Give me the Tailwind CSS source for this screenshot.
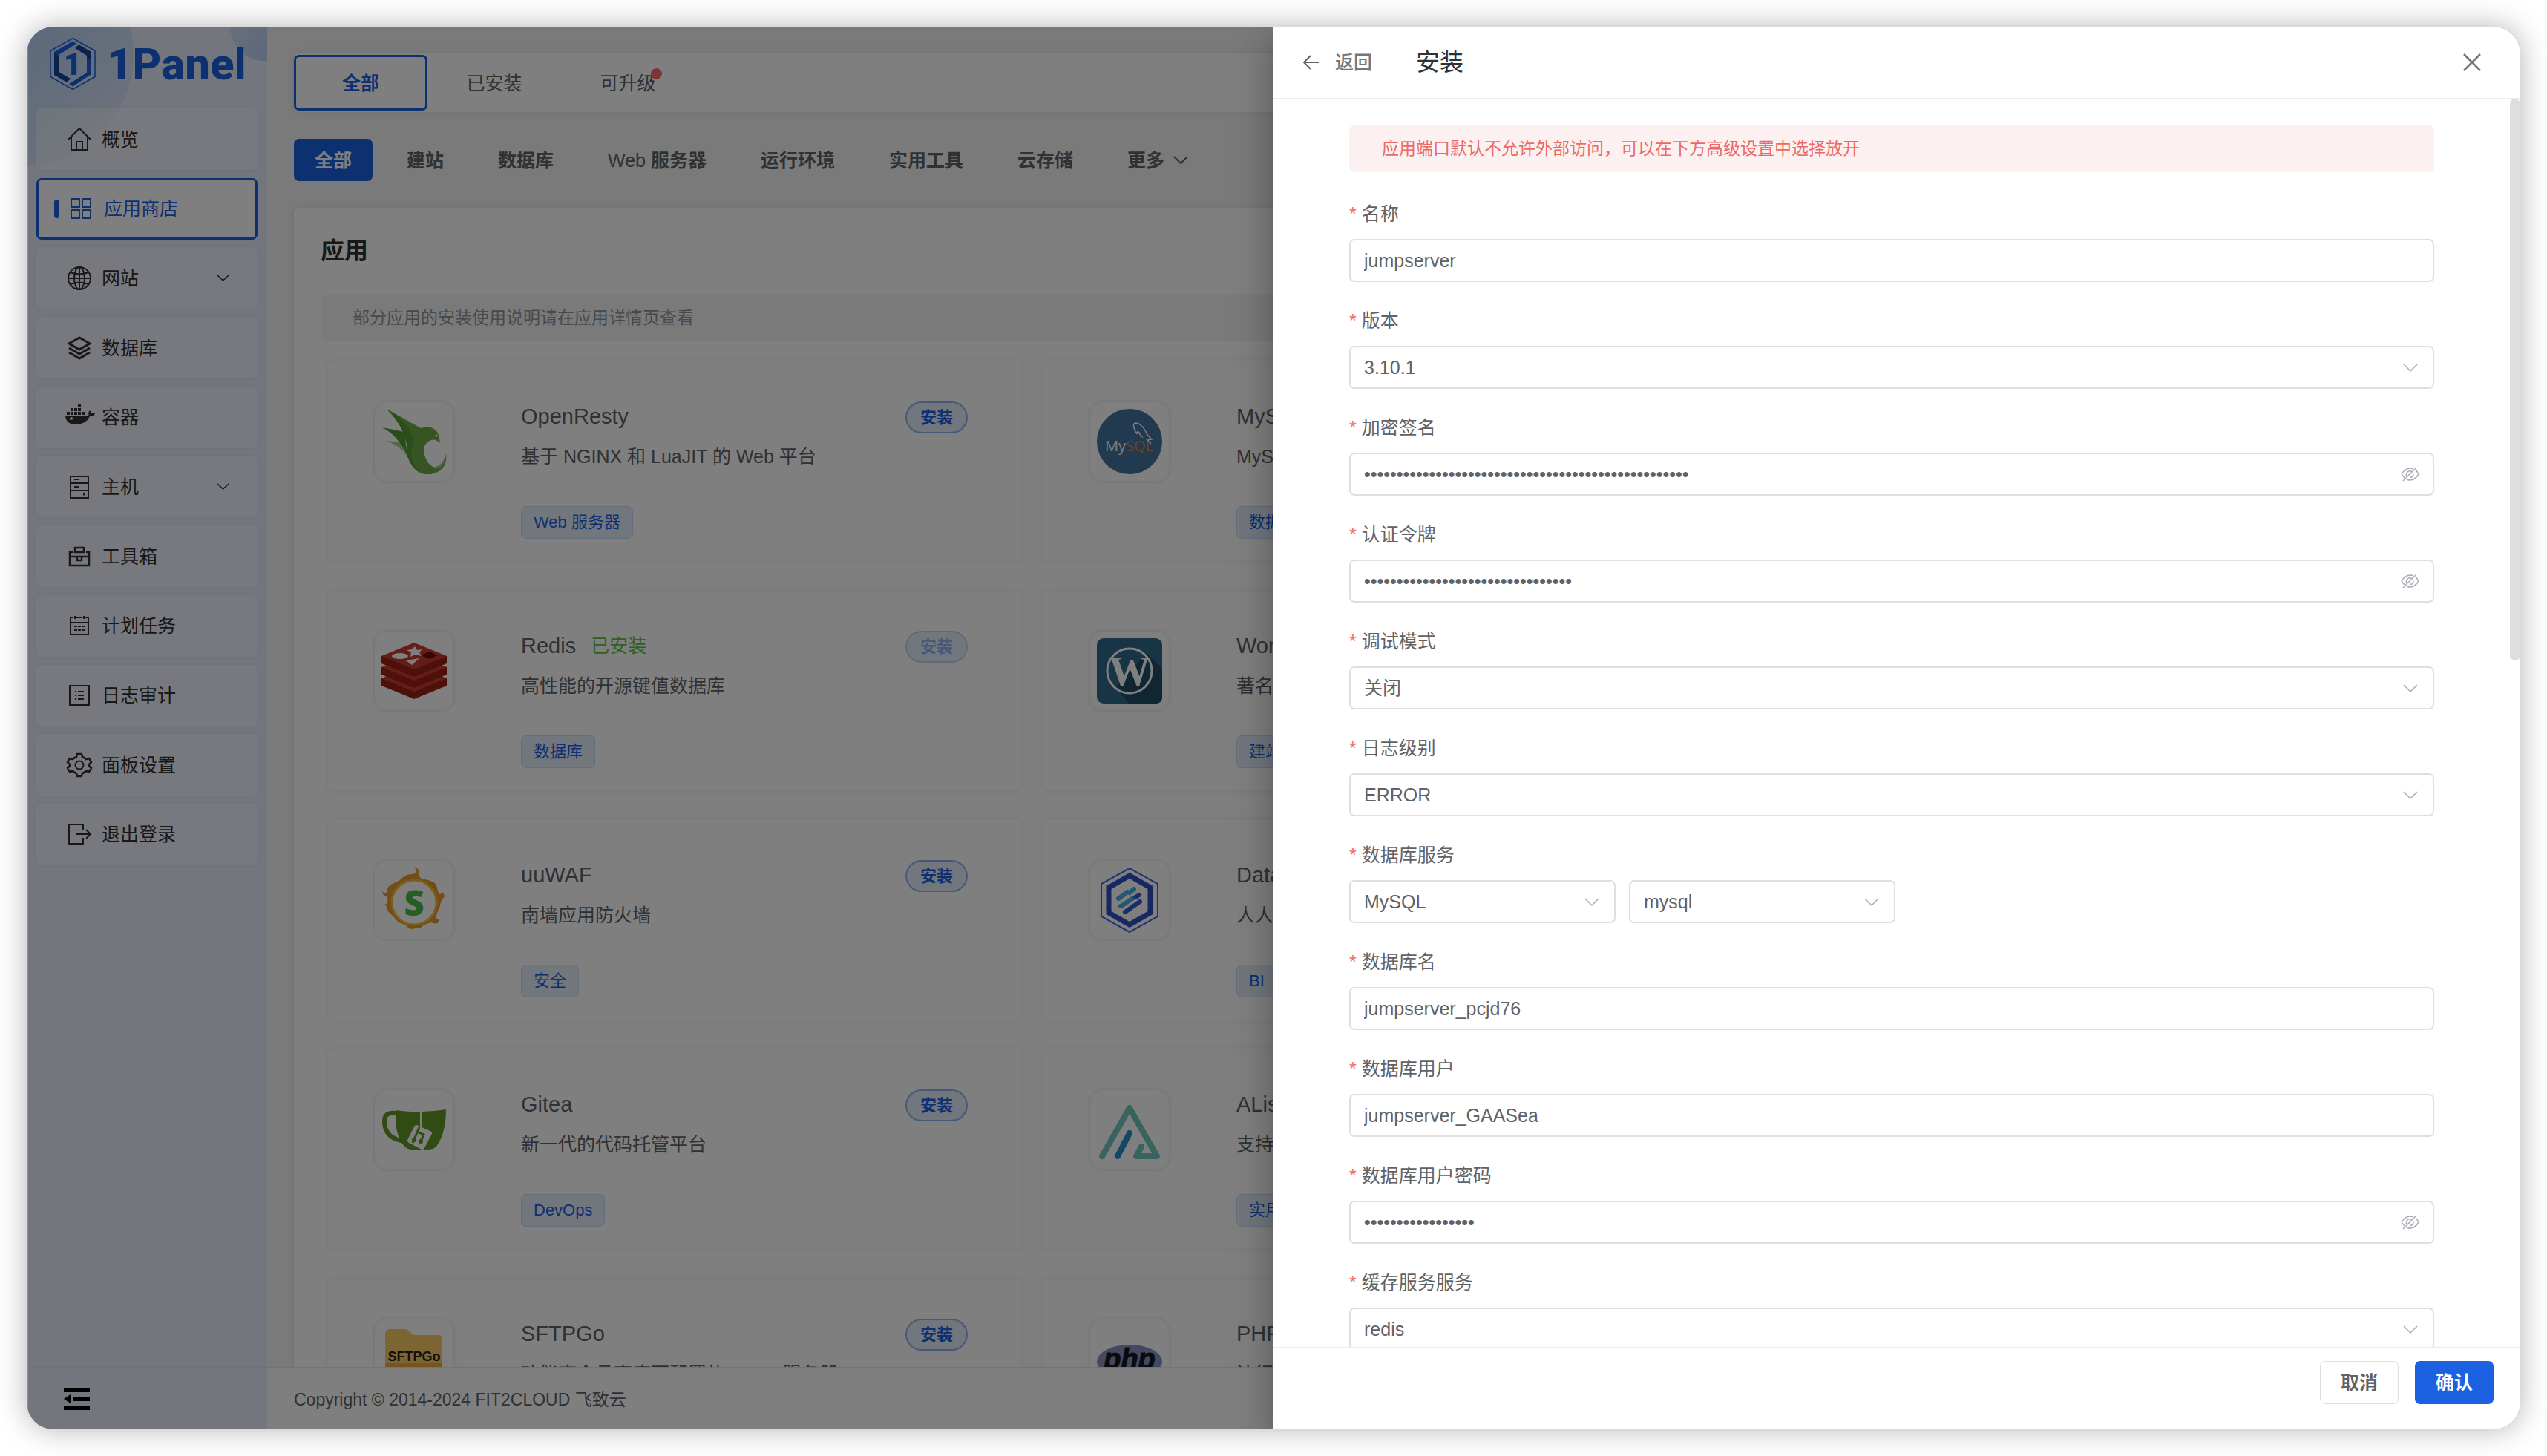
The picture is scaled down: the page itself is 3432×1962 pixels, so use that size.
<!DOCTYPE html>
<html lang="zh-CN">
<head>
  <meta charset="UTF-8" />
  <meta name="viewport" content="width=device-width, initial-scale=1.0" />
  <title>1Panel - 应用商店</title>
  <script src="https://cdn.jsdelivr.net/npm/@tailwindcss/browser@4"></script>
</head>
<body class="h-screen bg-white p-9 font-['Liberation_Sans','Noto_Sans_CJK_SC',sans-serif] text-[25px] leading-[40px] text-[#606266]">
  <div class="relative flex h-full overflow-hidden rounded-[36px] bg-[#f4f4f4] shadow-[0_0_40px_rgba(0,0,0,0.3)]">

    <!-- Sidebar -->
    <aside class="relative flex w-[324px] shrink-0 flex-col overflow-hidden bg-[#e6ecfb]">
      <svg class="absolute top-0 left-0" width="324" height="220" fill="none">
        <defs>
          <linearGradient id="glow" x1="0" y1="0" x2="0.9" y2="0.9">
            <stop offset="0.3" stop-color="#a9cdf2" />
            <stop offset="1" stop-color="#dfe6fa" />
          </linearGradient>
          <linearGradient id="drop" x1="0" y1="0" x2="1" y2="0.8">
            <stop offset="0.2" stop-color="#d4e0f7" />
            <stop offset="1" stop-color="#b4cbf5" />
          </linearGradient>
        </defs>
        <circle cx="-6" cy="38" r="150" fill="url(#glow)" />
        <circle cx="320" cy="0" r="46" fill="url(#drop)" />
      </svg>
      <a href="#" class="relative flex h-[110px] items-start gap-[14px] pt-[14px] pl-[30px] text-[#1b61e2]">
        <svg width="64" height="72" viewBox="0 0 64 72" fill="none">
          <path d="M32 1.500 62 18.500v35L32 70.500 2 53.500v-35Z" stroke="#1b61e2" stroke-width="1.500" />
          <path d="M32 5.500 37 9 13 24v24l-6 3V20Z" fill="#1b61e2" />
          <path d="M7 22l6 3v22l16 9-5 5-17-10Z" fill="#134697" />
          <path d="M40 10l17 10v31l-6-4V25L35 15Z" fill="#134697" />
          <path d="M57 50 32 66.500 27 63l24-15V28l6 2Z" fill="#1b61e2" />
          <text x="32" y="51" text-anchor="middle" font-family="Roboto" font-weight="900" font-size="42" fill="#1b61e2">1</text>
        </svg>
        <span class="font-[Roboto] text-[60px] leading-[74px] font-extrabold">1Panel</span>
      </a>
      <nav id="menu" class="relative mx-[13px] flex h-[1020px] flex-col justify-between text-[#303133]"></nav>
      <div class="relative mt-auto flex h-[84px] items-center border-t-2 border-[#dfe3ee] pl-[50px]">
        <button type="button" aria-label="收起菜单">
          <svg width="36" height="30" viewBox="0 0 36 30" fill="#000"><path d="M0 0h35v6H0zM12 12h23v6H12zM0 24h35v6H0zM9 9v12L0 15z" /></svg>
        </button>
      </div>
    </aside>

    <!-- App store -->
    <main class="flex min-w-0 flex-1 flex-col">
      <div class="flex min-h-0 flex-1 flex-col overflow-hidden pt-9 pl-9">
        <div class="flex h-[79px] shrink-0 items-center rounded-[7px] bg-white shadow-[0_0_8px_rgba(0,60,200,0.1)]">
          <button type="button" class="h-[75px] w-[180px] rounded-[7px] border-3 border-[#1b61e2] font-bold text-[#1b61e2]">全部</button>
          <button type="button" class="h-[75px] w-[180px]">已安装</button>
          <button type="button" class="h-[75px] w-[180px]"><span class="relative">可升级<i class="absolute -top-[6px] -right-2 size-[15px] rounded-full bg-[#f56c6c]"></i></span></button>
        </div>

        <div class="mt-9 flex h-[57px] shrink-0 gap-[19px] font-bold">
          <button type="button" class="rounded-[7px] bg-[#1b61e2] px-7 text-white">全部</button>
          <button type="button" class="px-[27px]">建站</button>
          <button type="button" class="px-[27px]">数据库</button>
          <button type="button" class="px-[27px]"><span class="font-normal">Web</span> 服务器</button>
          <button type="button" class="px-[27px]">运行环境</button>
          <button type="button" class="px-[27px]">实用工具</button>
          <button type="button" class="px-[27px]">云存储</button>
          <button type="button" class="flex items-center gap-3 px-[27px]">更多
            <svg width="20" height="12" viewBox="0 0 20 12" fill="none" stroke="#606266" stroke-width="2"><path d="m1 1 9 9 9-9" /></svg>
          </button>
        </div>

        <section class="mt-9 min-h-0 flex-1 rounded-tl-[7px] bg-white pt-9 pl-9 shadow-[0_0_8px_rgba(0,60,200,0.1)]">
          <h1 class="text-[32px] leading-[45px] font-bold text-[#303133]">应用</h1>
          <p class="mt-9 h-[63px] rounded-[7px] bg-[#f4f4f5] pl-[43px] text-[23px] leading-[63px] text-[#909399]">部分应用的安装使用说明请在应用详情页查看</p>
          <div id="apps" class="mt-[26px] ml-[9px] grid grid-cols-[936px_936px] gap-x-7 gap-y-[38px]"></div>
        </section>
      </div>
      <footer class="relative h-[84px] shrink-0 border-t-2 border-[#e4e7ed] bg-white pl-9 text-[23px] leading-[84px]">Copyright © 2014-2024 FIT2CLOUD 飞致云</footer>
    </main>

    <!-- Mask -->
    <div class="absolute inset-0 border-l-2 border-white/20 bg-black/50"></div>

    <!-- Install drawer -->
    <div role="dialog" aria-label="安装" class="absolute inset-y-0 right-0 flex w-1/2 flex-col bg-white shadow-[0_14px_18px_-9px_rgba(0,0,0,0.2),0_29px_43px_4px_rgba(0,0,0,0.14),0_11px_54px_9px_rgba(0,0,0,0.12)]">
      <header class="flex h-[97px] shrink-0 items-center border-b border-[#ebebeb] pr-[53px] pl-[39px]">
        <button type="button" class="flex items-center gap-[21px] font-medium text-[#73767a]">
          <svg width="23" height="20" viewBox="0 0 23 20" fill="none" stroke="#606266" stroke-width="2"><path d="M22 10H2M11 1l-9 9 9 9" /></svg>
          返回
        </button>
        <span class="mx-[29px] h-7 w-px bg-[#dcdfe6]"></span>
        <h2 class="text-[32px] text-[#303133]">安装</h2>
        <button type="button" aria-label="关闭" class="ml-auto">
          <svg width="24" height="24" viewBox="0 0 24 24" fill="none" stroke="#73767a" stroke-width="2.500"><path d="m1 1 22 22M23 1 1 23" /></svg>
        </button>
      </header>

      <div class="flex min-h-0 flex-1 overflow-hidden">
        <form id="form" class="min-w-0 flex-1 pt-9 pr-[102px] pl-[102px]">
          <p role="alert" class="mb-9 h-[63px] rounded-[7px] bg-[#fcf0f0] pl-11 text-[23px] leading-[63px] text-[#ec6a66]">应用端口默认不允许外部访问，可以在下方高级设置中选择放开</p>
        </form>
        <div class="h-[757px] w-[14px] rounded-full bg-[#dddee0]"></div>
      </div>

      <footer class="flex h-[111px] shrink-0 gap-[22px] border-t border-[#ebebeb] pt-[18px] pr-9 font-bold">
        <button type="button" class="ml-auto h-[58px] w-[106px] rounded-[7px] border border-[#dcdfe6]">取消</button>
        <button type="submit" form="form" class="h-[58px] w-[106px] rounded-[7px] bg-[#1b61e2] text-white">确认</button>
      </footer>
    </div>
  </div>

  <script>
    const menuItems = [
      { name: "概览", icon: `<path d="M2 17 17 2l15 15M6 14v17h22V14M13 31V20h8v11" />` },
      { name: "应用商店", active: true, icon: `<path d="M4 4h11v11H4zM19 4h11v11H19zM4 19h11v11H4zM19 19h11v11H19z" />` },
      { name: "网站", sub: true, icon: `<circle cx="17" cy="17" r="15" /><ellipse cx="17" cy="17" rx="7" ry="15" /><path d="M17 2v30M2 17h30M5 9q12 5 24 0M5 25q12-5 24 0" />` },
      { name: "数据库", icon: `<path d="m17 3 14 8-14 8-14-8ZM3 17l14 8 14-8M3 23l14 8 14-8" stroke-width="3" />` },
      { name: "容器", icon: `<g fill="#303133" stroke="none"><path d="M-2 15h31q1-1 0-4l2-3q2 2 2 4 3-1 5 0-1 4-7 4-5 11-19 11-13 0-14-12Z" /><path d="M0 10h4v4H0zM5 10h4v4H5zM10 10h4v4h-4zM15 10h4v4h-4zM20 10h4v4h-4zM5 5h4v4H5zM10 5h4v4h-4zM15 5h4v4h-4zM15 0h4v4h-4z" /></g><circle cx="6" cy="19" r="2" fill="#eff4fd" stroke="none" />` },
      { name: "主机", sub: true, icon: `<path d="M5 3h24v29H5zM5 12h24M5 22h24M10 7h7M10 17h7" /><path d="M22 27h3" stroke-width="3" />` },
      { name: "工具箱", icon: `<path d="M8 11H4v18h26V11h-4M11 11V5h12v6ZM4 17h9M21 17h9M14 17h6v5h-6Z" stroke-width="2.500" />` },
      { name: "计划任务", icon: `<path d="M9 6H5v23h24V6h-4M13 6h8M5 13h24M11 4v4M23 4v4M10 18h4M15 18h4M20 18h4M10 23h4M15 23h4M20 23h4" />` },
      { name: "日志审计", icon: `<path d="M4 4h26v26H4zM15 12h8M15 17h8M15 22h8M11 12h2M11 17h2M11 22h2" />` },
      { name: "面板设置", icon: `<path d="M14 2h6l1 4q3 1 5 3l4-1 3 5-3 3v2l3 3-3 5-4-1q-2 2-5 3l-1 4h-6l-1-4q-3-1-5-3l-4 1-3-5 3-3v-2l-3-3 3-5 4 1q2-2 5-3Z" stroke-width="2.500" /><circle cx="17" cy="17" r="5.500" />` },
      { name: "退出登录", icon: `<path d="M22 12V4H3v26h19v-8M12 17h20M26 11l6 6-6 6" />` },
    ];

    document.getElementById("menu").innerHTML = menuItems.map(item => `
      <a href="#" class="${item.active
        ? "flex h-[83px] items-center gap-[14px] rounded-[7px] border-3 border-[#1b61e2] bg-white pl-[21px] text-[#1b61e2]"
        : "flex h-[83px] items-center gap-[13px] rounded-[7px] bg-white/40 pr-[38px] pl-[41px] shadow-[0_0_4px_rgba(0,60,200,0.08)]"}">
        ${item.active ? `<i class="-mr-[2px] h-[25px] w-[7px] rounded-full bg-[#1b61e2]"></i>` : ""}
        <svg class="shrink-0 overflow-visible" width="34" height="34" viewBox="0 0 34 34" fill="none" stroke="currentColor" stroke-width="2">${item.icon}</svg>
        ${item.name}
        ${item.sub ? `<svg class="ml-auto" width="17" height="10" viewBox="0 0 17 10" fill="none" stroke="currentColor" stroke-width="1.500"><path d="m1 1 7.500 7L16 1" /></svg>` : ""}
      </a>`).join("");

    // one slab of the Redis stack, y is the middle of its top face
    const slab = (y) => `<path d="M0 ${y}v10l44 18 44-18V${y}Z" fill="#9c2117" /><path d="m0 ${y} 44-18 44 18-44 18Z" fill="#cb3a2e" />`;

    const apps = [
      { name: "OpenResty", desc: "基于 NGINX 和 LuaJIT 的 Web 平台", tag: "Web 服务器",
        icon: `<path d="M5 43q14 1 20 2l10 19Q24 48 5 43Z" fill="#a9d09b" /><path d="m1 25 30 6 4 33Q23 36 1 25Z" fill="#559b38" /><path d="m7 0 46 26q14-5 22 5 3 5 4 15-6-6-12-4-13 5-9 20 4 14 14 17 12-4 15-18 2 14-8 22-12 8-25 4-12-5-19-23Q39 32 7 0Z" fill="#6cab47" /><path d="M7 0q28 18 34 34 3 12-1 22 0 18 12 30-11-5-17-22Q37 30 7 0Z" fill="#579b36" /><circle cx="74" cy="36" r="1.500" fill="#fff" /><path d="M72 79q10-2 15-18 0 11-8 19Z" fill="#9cc68c" />` },
      { name: "MySQL", desc: "MySQL 是开源关系型数据库", tag: "数据库",
        icon: `<circle cx="44" cy="44" r="44" fill="#45749f" /><path d="M54 34q-8-14-2-15 8 0 14 12 2 5 8 10l-6 1 5 5M54 34q0-6 3-2 2 5 5 6" fill="none" stroke="#fff" stroke-width="1.500" /><text x="11" y="57" font-family="Open Sans" font-size="20" fill="#fff">My</text><text x="39" y="57" font-family="Open Sans" font-size="20" fill="#ea8420">SQL</text>` },
      { name: "Redis", desc: "高性能的开源键值数据库", tag: "数据库", installed: true,
        icon: `${slab(54)}${slab(39)}${slab(24)}<path d="m45 11 3 5 7-1-4 4 3 5-8-2-7 3 1-6-6-3 7-1ZM33 30l18-3-10 9Z" fill="#fff" /><ellipse cx="25" cy="24" rx="11" ry="4" fill="#fff" /><path d="m53 23 12-5 10 5-10 5Z" fill="#6c0f09" />` },
      { name: "WordPress", desc: "著名的开源博客软件", tag: "建站",
        icon: `<rect width="88" height="88" rx="9" fill="#306a8c" /><path d="m67 20 21 21v38q0 9-9 9H43L25 66Z" fill="#204c66" /><circle cx="44" cy="44" r="30" fill="none" stroke="#fff" stroke-width="3" /><text x="44" y="64" text-anchor="middle" font-family="Liberation Serif" font-weight="bold" font-size="56" fill="#fff">W</text>` },
      { name: "uuWAF", desc: "南墙应用防火墙", tag: "安全",
        icon: `<path d="M25 17Q33 8 42 9q5-1 5-5-1-3-4-3 7-1 8 5-2 6 3 9l9 2q10 2 12 10 1 8 4 9 4-1 1-5 4 3 5 8-6 7-6 13l-3 6-3 10 5 3q-2 7-11 3l-9 3-4 3q-3 4-7 1-5 4-11 0l-4-4-9-3-8-9-6-6-2-6q-2-3-5-5 4 3 6 0 1-6-1-9-5 1-6-8 3 6 6 3 0-10 10-13Z" fill="#e79a2e" /><circle cx="44" cy="47" r="30" fill="#fff" stroke="#f6bc33" stroke-width="3" /><text x="44" y="65" text-anchor="middle" font-family="Open Sans" font-weight="800" font-size="47" fill="#48bd4a">S</text>` },
      { name: "DataEase", desc: "人人可用的开源数据可视化分析工具", tag: "BI",
        icon: `<path d="M44 1 82 22v44L44 87 6 66V22Z" fill="none" stroke="#3c67e3" stroke-width="2" /><path d="M44 11 72 27v34L44 77 16 61V27Z" fill="none" stroke="#2e4fc4" stroke-width="7" /><g stroke-width="6" stroke-linecap="round"><path d="m44 34 6-5M29 42l12-9M33 52l16-11" stroke="#49aee3" /><path d="m38 60 20-14M52 40l5-3" stroke="#315bd4" /><path d="M32 52h1" stroke="#49aee3" /></g>` },
      { name: "Gitea", desc: "新一代的代码托管平台", tag: "DevOps",
        icon: `<path d="M24 23Q3 18 4 34q1 21 23 25" fill="none" stroke="#609926" stroke-width="6" /><path d="M19 18q34 5 68-1 0 32-13 50-4 4-12 4H40q-10-1-16-15-6-15-5-38Z" fill="#609926" /><path d="m47 41 18 8-10 19-17-9Z" fill="#fff" stroke="#fff" stroke-width="6" stroke-linejoin="round" /><path d="m51 41-9 21M48 47l9 4-4 9" fill="none" stroke="#609926" stroke-width="3" /><path d="M53 19v22" stroke="#fff" stroke-width="2" /><circle cx="44" cy="58" r="3" fill="#609926" /><circle cx="53" cy="60" r="3" fill="#609926" />` },
      { name: "AList", desc: "支持多存储的文件列表程序", tag: "实用工具",
        icon: `<g fill="none" stroke-width="8" stroke-linecap="round" stroke-linejoin="round"><path d="m7 80 37-65 37 65H53l7-13" stroke="#70c6be" /><path d="m28 80 16-31" stroke="#2b8ecb" /></g>` },
      { name: "SFTPGo", desc: "功能齐全且高度可配置的 SFTP 服务器", tag: "云存储",
        icon: `<path d="M5 10q0-6 6-6h23l9 8h33q6 0 6 6v62H5Z" fill="#fbc866" /><path d="M5 50h77v30H5Z" fill="#e9ab40" /><text x="44" y="47" text-anchor="middle" font-family="Liberation Sans" font-weight="bold" font-size="18" fill="#222">SFTPGo</text>` },
      { name: "PHP", desc: "流行的开源脚本语言", tag: "运行环境",
        icon: `<ellipse cx="44" cy="48" rx="44" ry="23" fill="#8892bf" /><text x="44" y="57" text-anchor="middle" font-family="Liberation Sans" font-weight="bold" font-style="italic" font-size="38" fill="#15171f" stroke="#15171f">php</text>` },
    ];

    document.getElementById("apps").innerHTML = apps.map(app => `
      <article class="flex h-[271px] items-start rounded-[7px] border border-[#f3f5fa] bg-white pt-[54px] pr-[72px] pl-[62px] shadow-[0_0_8px_rgba(0,60,200,0.08)]">
        <div class="grid size-[108px] shrink-0 place-items-center rounded-[18px] border border-[#ebeef5] shadow-[0_0_6px_rgba(0,0,0,0.1)]">
          <svg width="88" height="88" viewBox="0 0 88 88">${app.icon}</svg>
        </div>
        <div class="ml-[90px] flex min-w-0 flex-1 flex-col items-start whitespace-nowrap">
          <h3 class="flex gap-5 text-[29px] font-medium">${app.name}${app.installed ? `<span class="text-[25px] font-normal text-[#67c23a]">已安装</span>` : ""}</h3>
          <p class="mt-[14px]">${app.desc}</p>
          <span class="mt-[47px] h-11 rounded-[7px] border border-[#c9dbf8] bg-[#e5effd] px-4 text-[22px] leading-[42px] text-[#1b61e2]">${app.tag}</span>
        </div>
        <button type="button" ${app.installed ? "disabled" : ""} class="h-[43px] w-[84px] shrink-0 rounded-full border-2 border-[#8eb2f0] bg-[#e5effd] text-[22px] leading-[39px] font-bold text-[#1b61e2] disabled:border-[#bcd3f8] disabled:text-[#8eb2f0]">安装</button>
      </article>`).join("");

    const fields = [
      { label: "名称", value: "jumpserver" },
      { label: "版本", options: ["3.10.1"] },
      { label: "加密签名", password: 50 },
      { label: "认证令牌", password: 32 },
      { label: "调试模式", options: ["关闭"] },
      { label: "日志级别", options: ["ERROR"] },
      { label: "数据库服务", options: ["MySQL", "mysql"] },
      { label: "数据库名", value: "jumpserver_pcjd76" },
      { label: "数据库用户", value: "jumpserver_GAASea" },
      { label: "数据库用户密码", password: 17 },
      { label: "缓存服务服务", options: ["redis"] },
    ];

    function control(field, id) {
      if (field.options) {
        return field.options.map((option, n) => `
          <div class="${field.options.length > 1 ? "relative w-[359px]" : "relative w-full"}">
            <select id="${n ? id + "-" + n : id}" aria-label="${field.label}" class="h-[58px] w-full appearance-none rounded-[7px] border-2 border-[#dcdfe6] bg-white px-[18px]"><option>${option}</option></select>
            <svg class="pointer-events-none absolute top-6 right-[22px]" width="20" height="12" viewBox="0 0 20 12" fill="none" stroke="#a8abb2" stroke-width="1.500"><path d="m1 1 9 9 9-9" /></svg>
          </div>`).join("");
      }
      if (field.password) {
        return `
          <div class="relative w-full">
            <input id="${id}" type="password" value="${"x".repeat(field.password)}" class="h-[58px] w-full rounded-[7px] border-2 border-[#dcdfe6] px-[18px]" />
            <button type="button" aria-label="显示密码" class="absolute top-[18px] right-5">
              <svg width="25" height="22" viewBox="0 0 25 22" fill="none" stroke="#a8abb2" stroke-width="1.500"><path d="M1 11Q6 3 12.500 3 15 3 17 4M21 6l3 5q-5 8-11.500 8Q11 19 9 18.500M5 16l-4-5M15 7.500Q9 5 7.500 11v2M12 15.500q5 0 5-5M3 20 21 2" /></svg>
            </button>
          </div>`;
      }
      return `<input id="${id}" type="text" value="${field.value}" class="h-[58px] w-full rounded-[7px] border-2 border-[#dcdfe6] px-[18px]" />`;
    }

    document.getElementById("form").insertAdjacentHTML("beforeend", fields.map((field, i) => `
      <div class="mb-8">
        <label for="field-${i}" class="mb-[14px] flex gap-[7px]"><span class="text-[#f56c6c]">*</span>${field.label}</label>
        <div class="flex gap-[18px]">${control(field, "field-" + i)}</div>
      </div>`).join(""));
  </script>
</body>
</html>
